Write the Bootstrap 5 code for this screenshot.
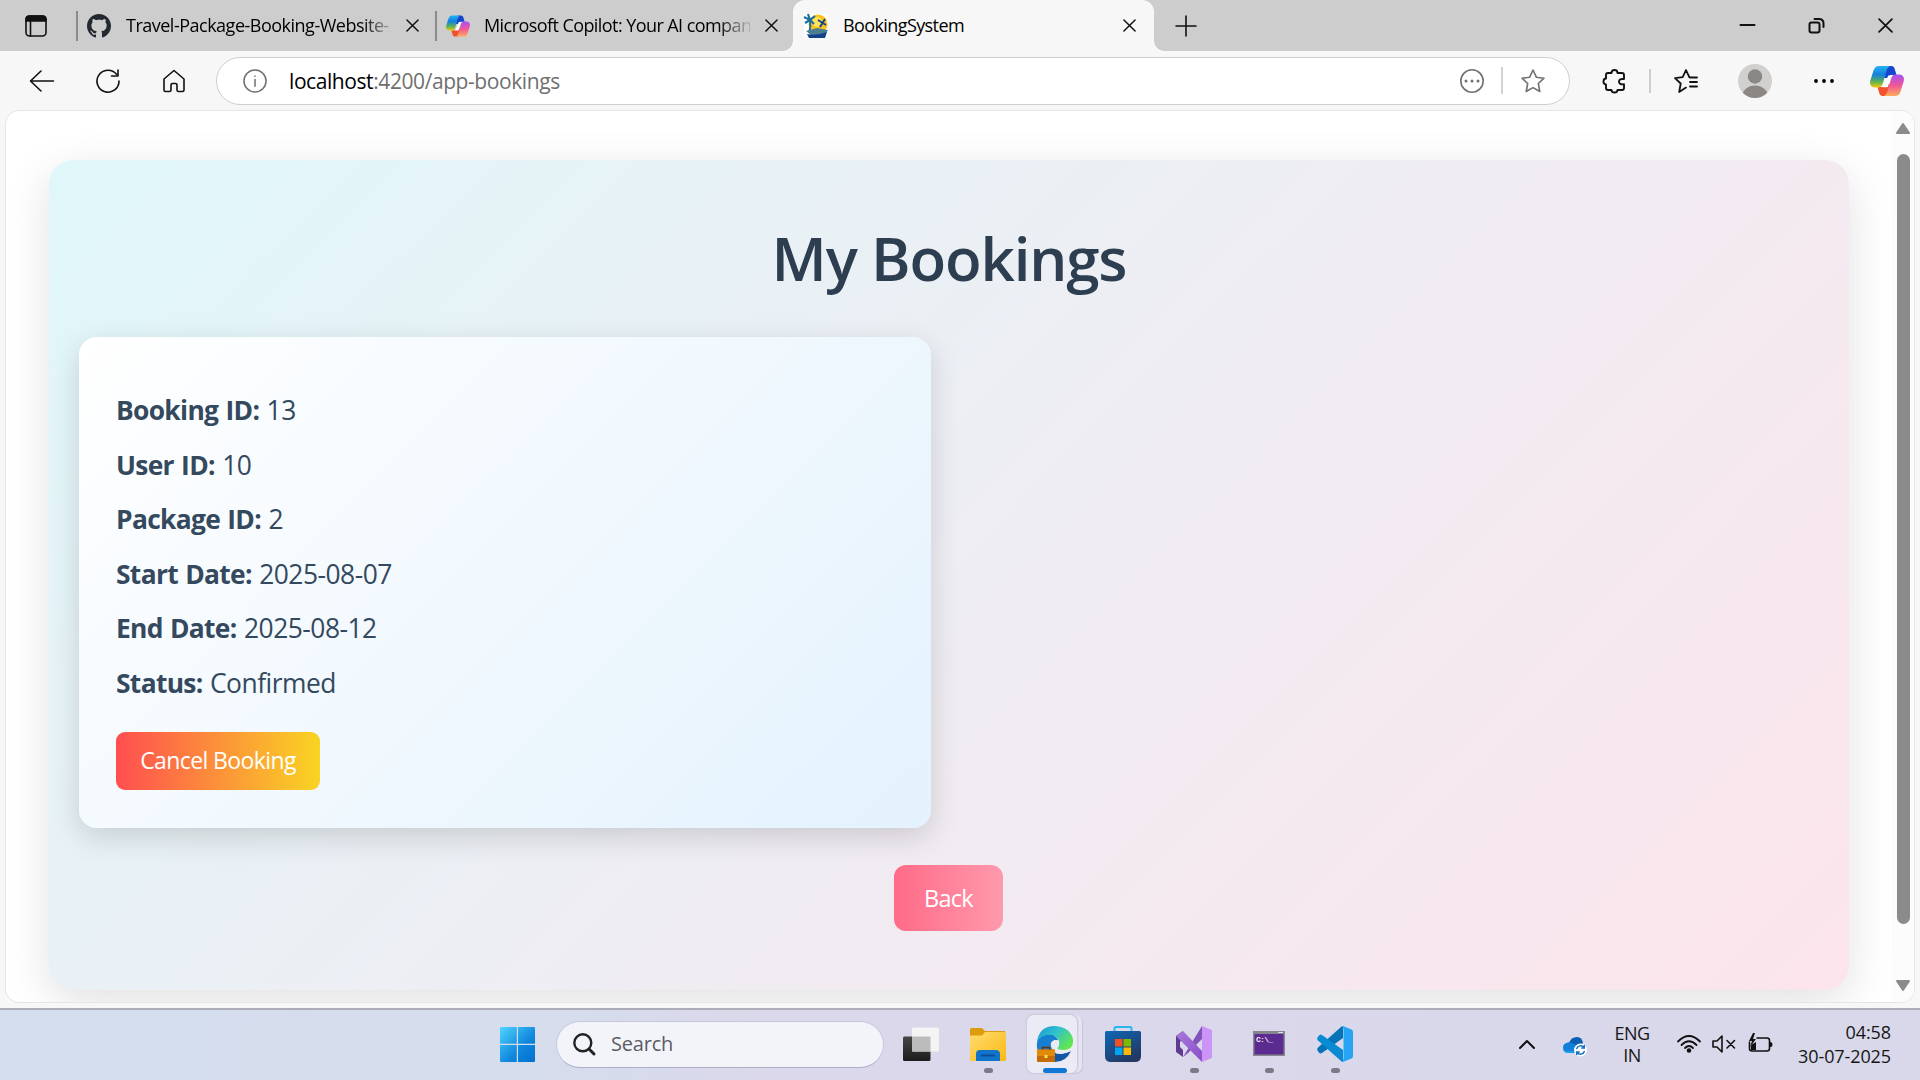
<!DOCTYPE html>
<html lang="en">
<head>
<meta charset="utf-8">
<title>BookingSystem</title>
<link href="https://cdn.jsdelivr.net/npm/bootstrap@5.3.0/dist/css/bootstrap.min.css" rel="stylesheet">
<style>
body{width:1920px;height:1080px;overflow:hidden;background:#f7f7f7;color:#000;font-family:"Open Sans","Noto Sans",sans-serif}
svg{display:block;flex:none;overflow:visible}
.ln{fill:none;stroke:#111;stroke-width:1.6;stroke-linecap:round;stroke-linejoin:round}
.gry{stroke:#707070}
.strip{height:51px;background:#cdcdcd;font-size:18px}
.vsep{width:2px;height:30px;background:#8b8b8b;flex:none}
.tab-box{height:51px;flex:none}
.tab-name{white-space:nowrap;line-height:28px;flex:none;letter-spacing:-.6px;margin-top:-1px}
.fade-end{-webkit-mask-image:linear-gradient(90deg,#000 88%,rgba(0,0,0,.15) 99%);mask-image:linear-gradient(90deg,#000 88%,rgba(0,0,0,.15) 99%)}
.live{background:#f7f7f7;border-radius:12px 12px 0 0;width:361px;padding-left:11px}
.live::before,.live::after{content:"";position:absolute;bottom:0;width:10px;height:10px}
.live::before{left:-10px;background:radial-gradient(circle at 0 0,transparent 9.5px,#f7f7f7 10px)}
.live::after{right:-10px;background:radial-gradient(circle at 100% 0,transparent 9.5px,#f7f7f7 10px)}
.tools{height:60px;padding-left:29px}
.omni{width:1354px;height:48px;border:1.5px solid #cfcfcf;border-radius:24px;background:#fff;margin:-1px 0 0 31px;padding-left:26px;font-size:21px;flex:none}
.url{color:#6f6f6f;letter-spacing:-.42px;white-space:nowrap;margin-top:2px}
.view{height:893px;margin:-1px 5px 0;border:1.5px solid #e6e6e6;border-radius:14px;background:#fff;overflow:hidden;flex:none}
.scroller{width:22px;background:#fcfcfc;padding:12px 0 11px;flex:none}
.thumb{width:13px;height:770px;border-radius:7px;background:#8b8b8b;margin-top:20px}
.panel{width:1800px;height:830px;margin:49px 0 0 43px;padding:62px 30px 0;border-radius:24px;background:linear-gradient(135deg,#e0f7fa,#fce4ec);box-shadow:0 12px 45px rgba(0,0,0,.12);flex:none}
.heading{font-size:60px;line-height:72px;font-weight:600;color:#2c3e50;letter-spacing:-1.15px;margin-bottom:43px}
.booking{width:852px;height:491px;border:0;border-radius:18px;padding:54px 37px 0;background:linear-gradient(135deg,#fff,#e3f2fd);box-shadow:0 9px 30px rgba(0,0,0,.15);color:#34495e;font-size:26.4px}
.booking p{line-height:39.6px;margin-bottom:15px;letter-spacing:-.5px;word-spacing:1px}
.booking strong{letter-spacing:-.68px}
.btn-cancel{width:204px;height:58px;border:0;border-radius:9px;color:#fff;font-size:23px;letter-spacing:-.6px;padding:0;background:linear-gradient(90deg,#ff4e50,#f9d423);margin-top:13px}
.btn-back{width:109px;height:66px;border:0;border-radius:12px;color:#fff;font-size:23.5px;letter-spacing:-.7px;padding:2px 0 0;background:linear-gradient(90deg,#ff6b88,#ff99ac);margin:37px 1px 0 0}
.btn-cancel:hover,.btn-back:hover{color:#fff}
.taskbar{height:72px;margin-top:5px;border-top:2px solid #adacb9;background:linear-gradient(90deg,#d4deee 0,#d6dcec 600px,#dad8ea 760px,#d9d8ea);padding:0 0 2px 500px;flex:none}
.finder{width:328px;height:47px;border:1.5px solid #c6c9dd;border-bottom-color:#adb0c2;border-radius:24px;background:#f3f4fa;margin-left:21px;padding-left:16px;font-size:20px;color:#5b5c63;flex:none}
.app{height:68px;width:36px;flex:none}
.dot::after{content:"";position:absolute;left:50%;top:58px;width:9px;height:5px;margin-left:-4px;border-radius:3px;background:#7b7a86}
.app-on{height:58px;width:50px;border-radius:7px;background:#ebebf5;box-shadow:0 0 0 1.5px #cfcee0,5px 0 0 0 #e6e5f1,6px 1px 0 0 #c8c7da;flex:none}
.app-on::after{content:"";position:absolute;left:16px;bottom:0;width:24px;height:5px;border-radius:3px;background:#0f78d4}
.tray{font-size:18px;line-height:22px;color:#161616}
</style>
</head>
<body class="d-flex flex-column">
<svg width="0" height="0" style="position:absolute">
<defs>
<linearGradient id="ca" x1="0" y1="0" x2="0" y2="1"><stop offset="0" stop-color="#25b2f2"/><stop offset=".4" stop-color="#1680dc"/><stop offset=".72" stop-color="#58b257"/><stop offset="1" stop-color="#f4c90c"/></linearGradient>
<linearGradient id="cb" x1="0" y1="0" x2="0" y2="1"><stop offset="0" stop-color="#a651f2"/><stop offset=".5" stop-color="#f0569a"/><stop offset="1" stop-color="#ffac56"/></linearGradient>
<linearGradient id="wn" x1="0" y1="0" x2="1" y2="1"><stop offset="0" stop-color="#4fd5ff"/><stop offset=".6" stop-color="#0f86dc"/><stop offset="1" stop-color="#0072d0"/></linearGradient>
<linearGradient id="ed" x1="0" y1="0" x2="1" y2=".6"><stop offset="0" stop-color="#1993d6"/><stop offset=".5" stop-color="#2fc2cd"/><stop offset="1" stop-color="#62e650"/></linearGradient>
<linearGradient id="fo" x1="0" y1="0" x2="1" y2="1"><stop offset="0" stop-color="#ffdc70"/><stop offset="1" stop-color="#fbb912"/></linearGradient>
<linearGradient id="st" x1="0" y1="0" x2=".6" y2="1"><stop offset="0" stop-color="#0f66b6"/><stop offset="1" stop-color="#233963"/></linearGradient>
<linearGradient id="vs" x1="0" y1="0" x2="1" y2="1"><stop offset="0" stop-color="#a878dc"/><stop offset="1" stop-color="#8b50c8"/></linearGradient>
<symbol id="copilot" viewBox="0 0 34 30">
<path fill="#1546cf" d="M16 0h5c2.500 0 3.500 1.500 4 4l1.500 5H22c-2 0-3 .5-4 3h-4z"/>
<path fill="#f0512f" d="M18 30h-5c-2.500 0-3.500-1.500-4-4l-1.500-5H12c2 0 3-.5 4-3h4z"/>
<path fill="url(#ca)" d="M9 0h11c-2 1-3 3-3.700 5.500L13 17c-1 3.200-2.200 4.500-5 4.500H5c-4 0-6-3-4.500-7.500l3-9.500C4.500 1.500 6 0 9 0z"/>
<path fill="url(#cb)" d="M25 30H14c2-1 3-3 3.700-5.500L21 13c1-3.200 2.200-4.500 5-4.500h3c4 0 6 3 4.500 7.500l-3 9.500c-1 3-2.500 4.500-5.500 4.500z"/>
<path fill="#fff" d="M18.300 9.500h3.800q-1.200 1.200-1.800 3.200L18 20.600q-.2.700-1.200.7h-4.600q1.500-1 2.200-3.400z"/>
</symbol>
<symbol id="cross" viewBox="0 0 14 14"><path d="M1 1l12 12M13 1L1 13"/></symbol>
</defs></svg>

<header class="strip d-flex align-items-center flex-shrink-0">
  <svg class="ln" width="22" height="22" style="margin-left:25px" viewBox="0 0 22 22"><rect x="1" y="1" width="20" height="20" rx="3.500"/><path d="M1 4.500Q1 1 4.500 1h13Q21 1 21 4.500V6H1z" fill="#111"/><path d="M5.500 6v15"/></svg>
  <div class="vsep" style="margin-left:29px"></div>
  <div class="tab-box d-flex align-items-center" style="width:359px;padding-left:9px">
    <svg width="24" height="24" viewBox="0 0 16 16" fill="#24292f"><path d="M8 0C3.580 0 0 3.580 0 8c0 3.540 2.290 6.530 5.470 7.590.4.070.55-.17.55-.38 0-.19-.01-.82-.01-1.490-2.010.37-2.530-.49-2.690-.94-.09-.23-.48-.94-.82-1.130-.28-.15-.68-.52-.01-.53.63-.01 1.080.58 1.230.82.72 1.210 1.870.87 2.330.66.07-.52.28-.87.51-1.070-1.780-.2-3.640-.89-3.640-3.950 0-.87.31-1.590.82-2.150-.08-.2-.36-1.020.08-2.120 0 0 .67-.21 2.200.82.64-.18 1.320-.27 2-.27s1.360.09 2 .27c1.530-1.040 2.200-.82 2.200-.82.44 1.100.16 1.920.08 2.120.51.56.82 1.270.82 2.150 0 3.070-1.870 3.750-3.650 3.950.29.25.54.73.54 1.480 0 1.070-.01 1.930-.01 2.200 0 .21.15.46.55.38A8.010 8.010 0 0 0 16 8c0-4.420-3.580-8-8-8z"/></svg>
    <div class="tab-name fade-end" style="width:268px;margin-left:15px;letter-spacing:-.5px">Travel-Package-Booking-Website-</div>
    <svg class="ln" width="13" height="13" style="margin-left:12px"><use href="#cross"/></svg>
  </div>
  <div class="vsep" style="margin-left:-2px"></div>
  <div class="tab-box d-flex align-items-center" style="width:356px;padding-left:9px">
    <svg width="24" height="24"><use href="#copilot" width="24" height="24"/></svg>
    <div class="tab-name fade-end" style="width:266px;margin-left:14px;letter-spacing:-.57px">Microsoft Copilot: Your AI compan</div>
    <svg class="ln" width="13" height="13" style="margin-left:15px"><use href="#cross"/></svg>
  </div>
  <div class="tab-box live position-relative d-flex align-items-center">
    <svg width="24" height="24" viewBox="0 0 24 24"><rect width="24" height="24" fill="#fff"/><circle cx="14" cy="10" r="9.500" fill="#ffc21a"/><circle cx="13" cy="8" r="5" fill="#ffe15b"/><path d="M6 6q1 7-1 13" stroke="#1f6fa3" stroke-width="2" fill="none"/><path d="M0 3l6 3 5-4M1 9l5-3 4 4M4 0l2 6" stroke="#1f6f9e" stroke-width="2.200" fill="none"/><path d="M14 6l8 5M21 5l-5 8" stroke="#17438a" stroke-width="2"/><path d="M2 17l11-3 11 2-3 5H7z" fill="#4a7f93"/><path d="M3 20q10 2 20-2l-2 6H5z" fill="#143f8b"/></svg>
    <div class="tab-name" style="width:270px;margin-left:15px">BookingSystem</div>
    <svg class="ln" width="13" height="13" style="margin-left:10px"><use href="#cross"/></svg>
  </div>
  <svg class="ln" width="20" height="20" style="margin-left:22px" viewBox="0 0 20 20"><path d="M10 0v20M0 10h20"/></svg>
  <div class="d-flex align-items-center ms-auto" style="padding-right:27px">
    <svg class="ln" width="15" height="15" viewBox="0 0 15 15"><path stroke-width="2" d="M.5 7h14"/></svg>
    <svg class="ln" width="15" height="15" style="margin-left:54px;stroke-width:2" viewBox="0 0 15 15"><rect x=".5" y="4.500" width="10" height="10" rx="2"/><path d="M5.500 1H10q4.500 0 4.500 4.500V9"/></svg>
    <svg class="ln" width="15" height="15" style="margin-left:54px"><use href="#cross"/></svg>
  </div>
</header>

<nav class="tools d-flex align-items-center flex-shrink-0">
  <svg class="ln" width="26" height="22" viewBox="0 0 26 22"><path d="M24.500 11H1.500M12 1L1.500 11 12 21"/></svg>
  <svg class="ln" width="24" height="24" style="margin-left:41px" viewBox="0 0 24 24"><path d="M23 12A11 11 0 1 1 20.500 5.200M22 1v6h-6.500"/></svg>
  <svg class="ln" width="22" height="24" style="margin-left:43px" viewBox="0 0 22 24"><path d="M1 10L11 1.500 21 10v11q0 1.500-1.500 1.500h-4Q14 22.500 14 21v-5q0-1.500-1.500-1.500h-3Q8 14.500 8 16v5q0 1.500-1.500 1.500h-4Q1 22.500 1 21z"/></svg>
  <div class="omni d-flex align-items-center">
    <svg class="ln gry" width="24" height="24" viewBox="0 0 25 25"><circle cx="12.500" cy="12.500" r="11.500"/><path d="M12.500 11v7M12.500 7.200v.3"/></svg>
    <div class="url" style="margin-left:22px"><span class="text-black">localhost</span>:4200/app-bookings</div>
    <svg class="ln gry ms-auto" width="24" height="24" viewBox="0 0 24 24"><circle cx="12" cy="12" r="11.200"/><path stroke-width="3" d="M6 12h.01M12 12h.01M18 12h.01"/></svg>
    <div style="width:2px;height:27px;background:#d2d2d2;margin-left:17px"></div>
    <svg class="ln gry" width="24" height="24" style="margin:0 24px 0 18px" viewBox="0 0 24 24"><path d="M12 1l3.300 7.200 7.700 1-5.700 5.300L18.800 22.500 12 18.600 5.200 22.500l1.500-8L1 9.200l7.700-1z"/></svg>
  </div>
  <svg class="ln" width="22" height="24" style="margin-left:33px;stroke-width:1.900" viewBox="0 0 22 24"><path d="M8.500 4q0-3 3-3t3 3h4.500q2 0 2 2v4q-5-.5-5 2.700t5 2.600V19q0 2-2 2h-4.500q0 2.500-3 2.500t-3-2.500H5q-2 0-2-2v-3.500q-2.500 0-2.500-3T3 9.500V6q0-2 2-2z"/></svg>
  <div style="width:2px;height:24px;background:#cfcfcf;margin-left:24px"></div>
  <svg class="ln" width="24" height="24" style="margin-left:23px;stroke-width:1.800" viewBox="0 0 24 24"><path d="M12 18.600L5.200 23l1.500-8.500L1 9.200l7.700-1L12 1l3.300 7.200M16 8.500h7M16 13h7M16 17.500h7"/></svg>
  <svg width="34" height="34" style="margin-left:40px" viewBox="0 0 34 34"><clipPath id="cp"><circle cx="17" cy="17" r="17"/></clipPath><g clip-path="url(#cp)"><rect width="34" height="34" fill="#d2d0ce"/><circle cx="17" cy="12.500" r="7.200" fill="#8a8785"/><ellipse cx="17" cy="33" rx="13" ry="11.500" fill="#8a8785"/></g></svg>
  <svg width="20" height="4" style="margin-left:42px" viewBox="0 0 20 4"><circle cx="2" cy="2" r="1.900"/><circle cx="10" cy="2" r="1.900"/><circle cx="18" cy="2" r="1.900"/></svg>
  <svg width="34" height="30" style="margin-left:36px"><use href="#copilot" width="34" height="30"/></svg>
</nav>

<main class="view d-flex">
  <section class="panel">
    <h1 class="heading text-center">My Bookings</h1>
    <div class="booking card align-items-start">
      <p><strong>Booking ID:</strong> 13</p>
      <p><strong>User ID:</strong> 10</p>
      <p><strong>Package ID:</strong> 2</p>
      <p><strong>Start Date:</strong> 2025-08-07</p>
      <p><strong>End Date:</strong> 2025-08-12</p>
      <p><strong>Status:</strong> Confirmed</p>
      <button class="btn btn-cancel">Cancel Booking</button>
    </div>
    <div class="text-center"><button class="btn btn-back">Back</button></div>
  </section>
  <div class="scroller d-flex flex-column align-items-center ms-auto">
    <svg width="14" height="11" viewBox="0 0 14 11"><path fill="#8b8b8b" stroke="#8b8b8b" stroke-width="2" stroke-linejoin="round" d="M7 1l6 9H1z"/></svg>
    <div class="thumb"></div>
    <svg class="mt-auto" width="14" height="11" viewBox="0 0 14 11"><path fill="#8b8b8b" stroke="#8b8b8b" stroke-width="2" stroke-linejoin="round" d="M7 10l6-9H1z"/></svg>
  </div>
</main>

<footer class="taskbar d-flex align-items-center">
  <svg width="35" height="35" viewBox="0 0 35 35"><path fill="url(#wn)" d="M1 0h15.800v16.800H0V1Q0 0 1 0zM18 0h16q1 0 1 1v15.800H18zM0 18h16.800v17H1q-1 0-1-1zM18 18h17v16q0 1-1 1H18z"/></svg>
  <div class="finder d-flex align-items-center">
    <svg width="23" height="23" viewBox="0 0 23 23" fill="none" stroke="#222" stroke-width="2.400" stroke-linecap="round"><circle cx="9.800" cy="9.800" r="8.500"/><path stroke-width="3" d="M16 16l5 5"/></svg>
    <span style="margin-left:15px;letter-spacing:-.2px">Search</span>
  </div>
  <svg width="36" height="35" style="margin-left:19px" viewBox="0 0 36 35"><defs><linearGradient id="tv" x2="0" y2="1"><stop stop-color="#454545"/><stop offset="1" stop-color="#1c1c1c"/></linearGradient></defs><rect y="9.500" width="27.500" height="24.500" rx="1.500" fill="url(#tv)"/><rect x="9" y=".5" width="27" height="24" rx="1.500" fill="#f4f4f4"/><path d="M9 9.500h18.500v15H9z" fill="#bcbcbc"/></svg>
  <div class="app dot position-relative d-flex align-items-center" style="margin-left:31px">
    <svg width="36" height="33" viewBox="0 0 36 33"><path fill="#dd9c0c" d="M1.500 0H12l3 3h20v8H0V1.500Q0 0 1.500 0z"/><path fill="url(#fo)" d="M0 7.500h12l3-3.500h19.500Q36 4 36 5.500v26q0 1.500-1.500 1.500h-33Q0 33 0 31.500z"/><path fill="#1273cb" d="M6 33v-7q0-4 4-4h16q4 0 4 4v7z"/><path stroke="#0b4f96" stroke-width="2" d="M11 27.500h14"/></svg>
  </div>
  <div class="app-on position-relative d-flex align-items-center justify-content-center" style="margin-left:21px">
    <svg width="36" height="36" style="margin:-1px 0 0 6px" viewBox="0 0 36 36">
      <path fill="#1157a5" d="M1 13q4-6 12-5 5 1 6 5-6 2-5 8 2 8 11 7 5-1 9-3-5 11-16 11Q2 35 0 20z"/>
      <path fill="url(#ed)" d="M0 16Q2 0 18 0q15 1 18 13 1 11-10 11-6 0-6-3 3-2 2-6-2-6-10-6-8 1-12 7z"/>
      <path fill="#167fcf" d="M0 17Q3 9 12 9q7 0 9 5-7-1-7 6 0 3 2 5H2q-3-4-2-8z"/>
      <circle cx="18" cy="18.500" r="4.200" fill="#ebebf5"/><path fill="#ebebf5" d="M14.500 20q3 3.500 8 4.500 6 1 11.500.2-3 2.300-9 2.300-9-1-10.500-7z"/>
      <rect x="0" y="23.500" width="18" height="12.500" rx="1" fill="#c56b08"/><path d="M0 24.500q0-1 1-1h16q1 0 1 1V30H0z" fill="#e18a0a"/><path d="M5.500 23.500v-2h7v2" fill="none" stroke="#653511" stroke-width="1.500"/><rect x="7.500" y="29" width="3" height="3" fill="#ffdd55"/></svg>
  </div>
  <svg width="36" height="36" style="margin-left:28px" viewBox="0 0 36 36"><path d="M9.500 7V2.500q0-1.500 1.500-1.500h14q1.500 0 1.500 1.500V7" fill="none" stroke="#2bb7ee" stroke-width="2"/><path fill="url(#st)" d="M1.500 5h33Q36 5 36 6.500V30q0 6-6 6H6q-6 0-6-6V6.500Q0 5 1.500 5z"/><path fill="#f25022" d="M10 13h7.500v7.500H10z"/><path fill="#7fba00" d="M18.500 13H26v7.500h-7.500z"/><path fill="#00a4ef" d="M10 21.500h7.500V29H10z"/><path fill="#ffb900" d="M18.500 21.500H26V29h-7.500z"/></svg>
  <div class="app dot position-relative d-flex align-items-center" style="margin-left:35px">
    <svg width="36" height="36" viewBox="0 0 36 36"><path fill="#5e3a91" d="M0 10l7-5v8l-3 3v5l3 3v7l-7-5z"/><path fill="#8253b8" d="M7 31L26 0v13L12 27z"/><path fill="url(#vs)" d="M0 10l7-5 19 20v11L4 14z"/><path fill="#cb94f6" d="M26 0l10 4v28l-10 4z"/></svg>
  </div>
  <div class="app dot position-relative d-flex align-items-center" style="margin-left:39px">
    <svg width="32" height="25" style="margin:0 0 1px 2px" viewBox="0 0 32 25"><rect width="32" height="25" fill="#86868d"/><rect x="1.500" y="3" width="29" height="20.500" fill="#5c2b91"/><path d="M25 1.500h5" stroke="#ddd"/><text x="3" y="11" font-family="Liberation Mono" font-weight="700" font-size="8" fill="#eee" textLength="17">C:\_</text></svg>
  </div>
  <div class="app dot position-relative d-flex align-items-center" style="margin-left:30px">
    <svg width="36" height="36" viewBox="0 0 36 36"><path fill="#0673b6" d="M26 0v12L5 27q-2 1-3-.5l-1.500-2Q-.5 23 1 21.500L24 1z"/><path fill="#088bd2" d="M26 36V24L5 9Q3.500 8 2 9.500l-1.500 2Q-.5 13 1 14.500L24 35z"/><path fill="#27a3f3" d="M26 0l8.500 3.500Q36 4 36 6v24q0 2-1.500 2.500L26 36q-1 0-2-1 2.500.5 2.500-2V3Q26.500.5 24 1z"/></svg>
  </div>
  <div class="tray d-flex align-items-center ms-auto" style="padding-right:29px">
    <svg class="ln" width="16" height="9" viewBox="0 0 16 9" style="stroke-width:2"><path d="M1 8l7-7 7 7"/></svg>
    <svg width="24" height="19" style="margin:4px 0 0 28px" viewBox="0 0 24 19"><path fill="#1f9be8" d="M5 16q-5 0-5-5t5-5l8-1 6 7-4 4z"/><path fill="#0a5fb4" d="M6 6q2-6 8-6 5 0 6 6l-6 4z"/><path fill="#1280d8" d="M1 8q3-4 8-2l9 5-5 3H2q-3-3-1-6z"/><circle cx="17.500" cy="13" r="6.500" fill="#fff"/><path d="M13.500 12a4.200 4.200 0 0 1 7.500-1.500M21.500 14a4.200 4.200 0 0 1-7.500 1.500M21.300 8v3h-3M13.700 18v-3h3" fill="none" stroke="#1372c4" stroke-width="1.400"/></svg>
    <div class="text-center" style="width:36px;margin-left:27px;letter-spacing:-.6px">ENG<br>IN</div>
    <svg class="ln" width="24" height="18" style="margin-left:27px;stroke-width:1.800" viewBox="0 0 24 18"><path d="M1 6.500q11-11 22 0M4.500 10q7.500-7.500 15 0M8 13q4-4 8 0"/><circle cx="12" cy="15.500" r="1.400" fill="#111"/></svg>
    <svg class="ln" width="24" height="18" style="margin-left:11px" viewBox="0 0 24 18"><path d="M1 6h4l5-5v16l-5-5H1zM15 5.500l7.500 7.500M22.500 5.500L15 13"/></svg>
    <svg class="ln" width="25" height="20" style="margin:-3px 0 0 12px" viewBox="0 0 25 20"><path d="M9 5h10q2.500 0 2.500 2.500v8q0 2.500-2.500 2.500H4q-2.500 0-2.500-2.500V9"/><path fill="#111" stroke="none" d="M21.500 9h1q2 0 2 2.500t-2 2.500h-1zM5 0L1 8h3l-2 6 6-8H5l2-6zM3 17V12l5-3v8z"/></svg>
    <div class="text-end" style="width:96px;margin-left:22px;line-height:24px;letter-spacing:-.1px;white-space:nowrap">04:58<br>30-07-2025</div>
  </div>
</footer>
<script src="https://cdn.jsdelivr.net/npm/bootstrap@5.3.0/dist/js/bootstrap.bundle.min.js"></script>
</body>
</html>
